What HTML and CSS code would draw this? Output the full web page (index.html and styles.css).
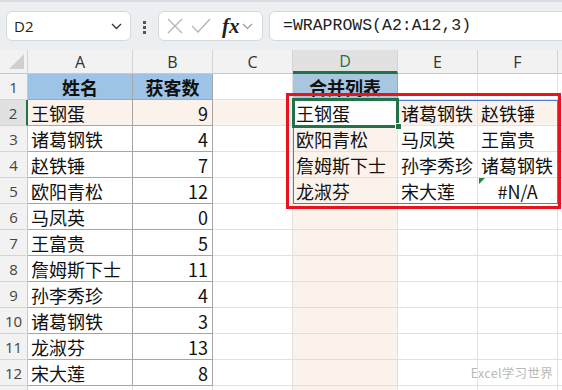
FILE: index.html
```html
<!DOCTYPE html>
<html lang="zh-CN">
<head>
    <meta charset="UTF-8">
    <meta name="viewport" content="width=device-width, initial-scale=1.0">
    <title>WRAPROWS</title>
    <link rel="stylesheet" href="styles.css">
</head>
<body>
    <div class="toolbar">
        <div class="namebox">
            <span>D2</span>
            <svg width="11" height="7" viewBox="0 0 11 7"><path d="M1 1l4.5 4.5L10 1" fill="none" stroke="#333" stroke-width="1.3"/></svg>
        </div>
        <div class="dots"><i></i><i></i><i></i></div>
        <div class="fxbox">
            <svg width="16" height="16" viewBox="0 0 16 16"><path d="M1 1l14 14M15 1L1 15" stroke="#b4b4b4" stroke-width="1.3"/></svg>
            <svg width="20" height="16" viewBox="0 0 20 16"><path d="M1 8l6 6L19 1" fill="none" stroke="#b4b4b4" stroke-width="1.3"/></svg>
            <span class="fx">fx</span>
            <svg width="11" height="7" viewBox="0 0 11 7"><path d="M1 1l4.5 4.5L10 1" fill="none" stroke="#999" stroke-width="1.2"/></svg>
        </div>
        <div class="formula">=WRAPROWS(A2:A12,3)</div>
    </div>

    <div class="sheet">
        <div class="grid" id="grid">
            <!-- cells are filled in by the script below -->
        </div>
        <div class="spill"></div>
        <div class="active"></div>
        <div class="handle"></div>
        <div class="redbox"></div>
        <div class="watermark">Excel学习世界</div>
    </div>

    <script>
        // sheet data: name, count, blank, then the WRAPROWS result
        const rows = [
            ["姓名", "获客数", "", "合并列表", "", ""],
            ["王钢蛋", 9, "", "王钢蛋", "诸葛钢铁", "赵铁锤"],
            ["诸葛钢铁", 4, "", "欧阳青松", "马凤英", "王富贵"],
            ["赵铁锤", 7, "", "詹姆斯下士", "孙李秀珍", "诸葛钢铁"],
            ["欧阳青松", 12, "", "龙淑芬", "宋大莲", "#N/A"],
            ["马凤英", 0],
            ["王富贵", 5],
            ["詹姆斯下士", 11],
            ["孙李秀珍", 4],
            ["诸葛钢铁", 3],
            ["龙淑芬", 13],
            ["宋大莲", 8],
            []
        ];
        const letters = ["A", "B", "C", "D", "E", "F", ""];
        const grid = document.getElementById("grid");

        function cell(cls, text) {
            const div = document.createElement("div");
            div.className = cls;
            div.textContent = text === undefined ? "" : text;
            grid.appendChild(div);
        }

        // column headers
        cell("corner");
        letters.forEach(l => cell(l === "D" ? "colhead on" : "colhead", l));

        rows.forEach((row, r) => {
            const n = r + 1;
            // last row is only a sliver at the bottom edge, no number shows
            cell(n === 2 ? "rowhead on" : "rowhead", n <= 12 ? n : "");
            for (let c = 0; c < 7; c++) {
                let cls = "cell";
                const v = row[c];
                if (n <= 12 && c < 2) cls += " tbl";
                if (c === 1) cls += " num";
                if (c === 3) cls += " col-d";
                if (n === 1 && (c < 2 || c === 3)) cls += " head";
                if (n === 1 && c === 3) cls += " head-d";
                if (n === 2 && c !== 3) cls += " sel";
                if (n > 2 && c === 3) cls += " sel";
                if (v === "#N/A") cls += " err";
                cell(cls, v);
            }
        });
    </script>
</body>
</html>
```

FILE: styles.css
```css
body {
    margin: 0;
    width: 562px;
    height: 390px;
    overflow: hidden;
    background: #ffffff;
    font-family: "Noto Sans CJK SC", sans-serif;
}
.toolbar {
    height: 50px;
    box-sizing: border-box;
    padding: 11px 0 0 6px;
    display: flex;
    align-items: flex-start;
    background: #eceff2;
    border-top: 2px solid #d9dde1;
}
.namebox {
    width: 125px;
    height: 30px;
    box-sizing: border-box;
    margin-top: -2px;
    display: flex;
    align-items: center;
    justify-content: space-between;
    padding: 0 8px 0 7px;
    background: #ffffff;
    border: 1px solid #d6d8db;
    border-radius: 6px;
    font-family: "Open Sans", sans-serif;
    font-size: 15px;
    color: #222;
}
.dots {
    width: 27px;
    height: 28px;
    display: flex;
    flex-direction: column;
    align-items: center;
    justify-content: center;
    gap: 2px;
}
.dots i {
    width: 3px;
    height: 3px;
    background: #555;
}
.fxbox {
    width: 105px;
    height: 30px;
    box-sizing: border-box;
    margin-top: -2px;
    display: flex;
    align-items: center;
    padding: 0 4px 0 8px;
    gap: 8px;
    background: #ffffff;
    border: 1px solid #d6d8db;
    border-radius: 6px;
}
.fxbox .fx {
    margin-left: 3px;
    margin-right: -6px;
    font-family: "Liberation Serif", serif;
    font-style: italic;
    font-weight: bold;
    font-size: 21px;
    color: #222;
}
.formula {
    flex: 1;
    height: 30px;
    box-sizing: border-box;
    margin: -2px -10px 0 6px;
    padding: 4px 0 0 13px;
    background: #ffffff;
    border: 1px solid #d6d8db;
    border-radius: 6px;
    font-family: "Liberation Mono", monospace;
    font-size: 16.5px;
    color: #222;
}
.sheet {
    position: relative;
    height: 340px;
    overflow: hidden;
}
.grid {
    display: grid;
    grid-template-columns: 28px 105px 80px 80px 105px 80px 80px 1fr;
    grid-template-rows: 24px repeat(13, 26px);
}
.corner {
    position: relative;
    background: #f2f2f2;
    border-right: 1px solid #d4d4d4;
    border-bottom: 1px solid #c8c8c8;
}
.corner::after {
    content: "";
    position: absolute;
    right: 3px;
    bottom: 4px;
    border-style: solid;
    border-width: 0 0 15px 15px;
    border-color: transparent transparent #cfcfcf transparent;
}
.colhead {
    display: flex;
    align-items: center;
    justify-content: center;
    background: #f2f2f2;
    border-right: 1px solid #d4d4d4;
    border-bottom: 1px solid #c8c8c8;
    font-family: "Open Sans", sans-serif;
    font-size: 16px;
    color: #333;
}
.colhead.on {
    background: #e1e1e1;
    color: #217346;
    border-bottom: 3px solid #217346;
}
.rowhead {
    display: flex;
    align-items: center;
    justify-content: center;
    background: #f2f2f2;
    border-right: 1px solid #c8c8c8;
    border-bottom: 1px solid #d4d4d4;
    font-family: "Open Sans", sans-serif;
    font-size: 15px;
    color: #444;
}
.rowhead.on {
    background: #e1e1e1;
    border-right: 2px solid #217346;
}
.cell {
    position: relative;
    display: flex;
    align-items: center;
    padding: 0 3px;
    overflow: hidden;
    white-space: nowrap;
    border-right: 1px solid #e1e1e1;
    border-bottom: 1px solid #e1e1e1;
    font-size: 18px;
    line-height: 1;
    color: #111;
}
.cell.tbl {
    border-color: #a6a6a6;
}
.cell.num {
    justify-content: flex-end;
    padding-right: 4px;
}
.cell.col-d {
    border-color: #eadcd2;
}
.cell.sel {
    background: #fcf2ec;
}
.cell.head {
    justify-content: center;
    background: #9dc3e6;
    font-weight: bold;
    padding: 0;
}
.cell.head-d {
    background: #a8c6e0;
    border-right-color: #a6a6a6;
}
.cell.err {
    justify-content: center;
    padding: 0;
}
.cell.err::before {
    content: "";
    position: absolute;
    left: 1px;
    top: 0;
    border-style: solid;
    border-width: 6px 6px 0 0;
    border-color: #1e8a3c transparent transparent transparent;
}
.spill {
    position: absolute;
    left: 293px;
    top: 50px;
    width: 265px;
    height: 104px;
    box-sizing: border-box;
    border: 1px solid #4f7dc9;
}
.active {
    position: absolute;
    left: 292px;
    top: 48px;
    width: 107px;
    height: 30px;
    box-sizing: border-box;
    border: 3px solid #217346;
}
.handle {
    position: absolute;
    left: 395px;
    top: 73px;
    width: 5px;
    height: 5px;
    background: #217346;
    border: 1px solid #ffffff;
}
.redbox {
    position: absolute;
    left: 286px;
    top: 43px;
    width: 275px;
    height: 116px;
    box-sizing: border-box;
    border: 3px solid #e8131c;
}
.watermark {
    position: absolute;
    right: 9px;
    bottom: 8px;
    font-size: 12.5px;
    color: #b8b8b8;
    text-shadow: 1px 1px 0 #ffffff, -1px -1px 0 #ffffff;
    letter-spacing: 0.3px;
}
```
